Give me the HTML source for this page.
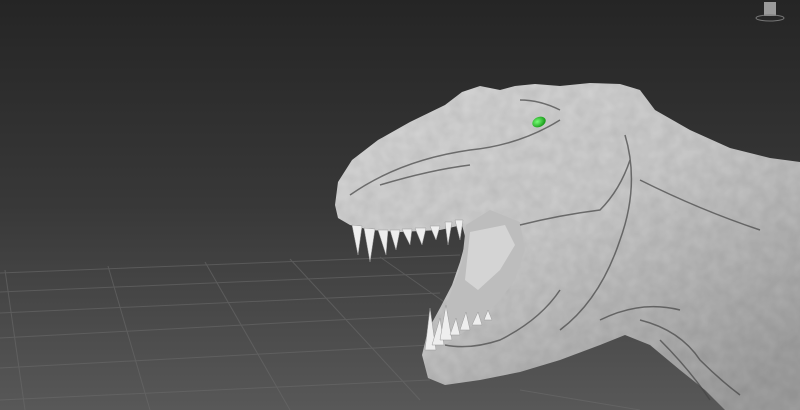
<!DOCTYPE html>
<html><head><style>html,body{margin:0;padding:0;width:800px;height:410px;overflow:hidden;background:#333}</style></head>
<body>
<svg width="800" height="410" viewBox="0 0 800 410" xmlns="http://www.w3.org/2000/svg">
<defs>
<linearGradient id="bg" x1="0" y1="0" x2="0" y2="1">
<stop offset="0" stop-color="#252525"/><stop offset="0.5" stop-color="#383838"/><stop offset="1" stop-color="#585858"/>
</linearGradient>
<linearGradient id="skin" x1="0" y1="0" x2="0.8" y2="1">
<stop offset="0" stop-color="#dadada"/><stop offset="0.5" stop-color="#cccccc"/><stop offset="1" stop-color="#a0a0a0"/>
</linearGradient>
<radialGradient id="eye" cx="0.4" cy="0.4" r="0.6"><stop offset="0" stop-color="#7f7"/><stop offset="1" stop-color="#1a9a1a"/></radialGradient>
<filter id="n"><feTurbulence type="fractalNoise" baseFrequency="0.08" numOctaves="2" seed="3"/><feColorMatrix values="0 0 0 0 0  0 0 0 0 0  0 0 0 0 0  0 0 0 0.1 0"/><feComposite in2="SourceGraphic" operator="in"/></filter>
</defs>
<rect width="800" height="410" fill="url(#bg)"/>
<g stroke="#6a6a6a" stroke-width="1" opacity="0.6" fill="none">
<path d="M0 273 L460 255"/><path d="M0 292 L470 272"/><path d="M0 313 L440 293"/><path d="M0 338 L430 315"/><path d="M0 368 L430 345"/><path d="M0 400 L430 380"/>
<path d="M5 270 L25 410"/><path d="M108 266 L150 410"/><path d="M205 262 L290 410"/><path d="M290 259 L420 400"/><path d="M380 257 L470 320"/>
<path d="M520 390 L640 410"/>
</g>
<path fill="url(#skin)" d="M335 205 L338 182 L352 160 L378 140 L410 122 L445 105 L462 92 L480 86 L500 90 L515 86 L535 84 L560 86 L590 83 L620 84 L640 90 L655 110 L690 130 L730 148 L770 158 L800 162 L800 410 L725 410 L705 390 L680 370 L650 345 L625 335 L600 345 L560 360 L520 372 L480 380 L445 385 L428 378 L422 355 L428 330 L440 308 L452 285 L460 262 L466 240 L462 225 L440 230 L400 232 L370 230 L350 225 L338 218 Z"/>
<path fill="#000" filter="url(#n)" d="M335 205 L338 182 L352 160 L378 140 L410 122 L445 105 L462 92 L480 86 L500 90 L515 86 L535 84 L560 86 L590 83 L620 84 L640 90 L655 110 L690 130 L730 148 L770 158 L800 162 L800 410 L725 410 L705 390 L680 370 L650 345 L625 335 L600 345 L560 360 L520 372 L480 380 L445 385 L428 378 L422 355 L428 330 L440 308 L452 285 L460 262 L466 240 L462 225 L440 230 L400 232 L370 230 L350 225 L338 218 Z"/>
<path fill="#bdbdbd" d="M466 225 L490 210 L520 222 L525 250 L515 280 L500 300 L480 320 L460 335 L445 345 L440 320 L452 290 L462 262 Z"/>
<path fill="#dedede" d="M470 232 L505 225 L515 245 L500 270 L478 290 L465 280 Z" opacity="0.7"/>
<g fill="none" stroke="#444" stroke-width="1.5" opacity="0.7">
<path d="M350 195 Q400 160 470 150 Q520 145 560 120"/>
<path d="M380 185 Q430 170 470 165"/>
<path d="M520 225 Q560 215 600 210 Q620 190 630 160"/>
<path d="M625 135 Q640 185 620 240 Q600 300 560 330"/>
<path d="M640 320 Q680 330 700 360 Q720 380 740 395"/>
<path d="M660 340 Q690 370 710 400"/>
<path d="M600 320 Q640 300 680 310"/>
<path d="M445 345 Q470 350 500 340 Q540 320 560 290"/>
<path d="M520 100 Q540 100 560 110"/>
<path d="M640 180 Q700 210 760 230"/>
</g>
<g fill="#eee" stroke="#999" stroke-width="0.5">
<path d="M352 225 L358 255 L362 226Z"/><path d="M364 228 L370 262 L375 229Z"/><path d="M378 230 L386 255 L388 230Z"/><path d="M390 230 L396 250 L400 230Z"/><path d="M402 229 L410 245 L412 229Z"/><path d="M415 228 L422 245 L426 228Z"/><path d="M430 226 L436 240 L440 226Z"/><path d="M445 222 L448 245 L452 222Z"/><path d="M455 220 L460 240 L463 220Z"/>
<path d="M425 350 L430 308 L436 350Z"/><path d="M432 345 L440 318 L444 345Z"/><path d="M440 340 L446 305 L452 340Z"/><path d="M450 335 L456 318 L460 335Z"/><path d="M460 330 L466 312 L470 330Z"/><path d="M472 325 L478 312 L482 325Z"/><path d="M484 320 L488 310 L492 320Z"/>
</g>
<ellipse cx="539" cy="122" rx="7" ry="5" fill="url(#eye)" transform="rotate(-25 539 122)"/>
<g>
<rect x="764" y="2" width="12" height="14" fill="#9a9a9a"/>
<ellipse cx="770" cy="18" rx="14" ry="3" fill="none" stroke="#777" stroke-width="1"/>
</g>
</svg>
</body></html>
